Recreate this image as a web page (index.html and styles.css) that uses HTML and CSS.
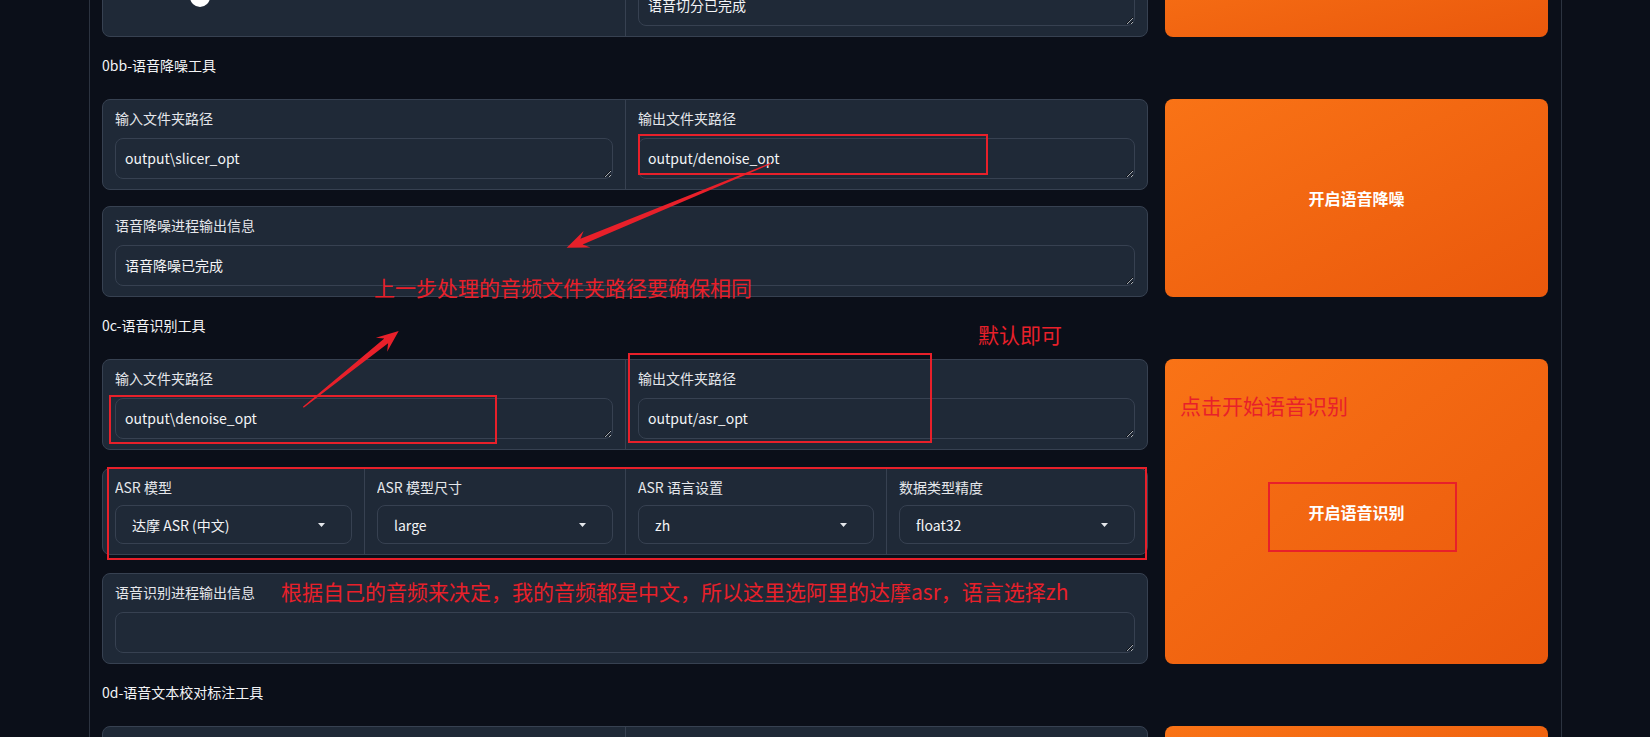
FILE: index.html
```html
<!DOCTYPE html>
<html lang="zh-CN">
<head>
<meta charset="utf-8">
<title>GPT-SoVITS WebUI</title>
<link rel="stylesheet" href="styles.css">
</head>
<body>
<div class="page">
  <div class="container">

    <div class="row">
      <div class="col-main gap-17">
        <div class="block">
          <div class="cell">
            <div class="label-space"></div>
            <div class="slider">
              <div class="track"><div class="fill" style="width:17.1%"><span class="thumb"></span></div></div>
            </div>
          </div>
          <div class="cell">
            <div class="label-space"></div>
            <textarea class="textarea" readonly>语音切分已完成</textarea>
          </div>
        </div>
      </div>
      <div class="col-side"><button class="btn" aria-label="开启语音切割"></button></div>
    </div>

    <div class="section-label">0bb-语音降噪工具</div>

    <div class="row">
      <div class="col-main gap-16">
        <div class="block">
          <div class="cell">
            <div class="label">输入文件夹路径</div>
            <textarea class="textarea" readonly>output\slicer_opt</textarea>
          </div>
          <div class="cell">
            <div class="label">输出文件夹路径</div>
            <textarea class="textarea" readonly>output/denoise_opt</textarea>
          </div>
        </div>
        <div class="block">
          <div class="cell">
            <div class="label">语音降噪进程输出信息</div>
            <textarea class="textarea" readonly>语音降噪已完成</textarea>
          </div>
        </div>
      </div>
      <div class="col-side"><button class="btn">开启语音降噪</button></div>
    </div>

    <div class="section-label">0c-语音识别工具</div>

    <div class="row">
      <div class="col-main gap-18">
        <div class="block">
          <div class="cell">
            <div class="label">输入文件夹路径</div>
            <textarea class="textarea" readonly>output\denoise_opt</textarea>
          </div>
          <div class="cell">
            <div class="label">输出文件夹路径</div>
            <textarea class="textarea" readonly>output/asr_opt</textarea>
          </div>
        </div>
        <div class="block dd-block">
          <div class="cell">
            <div class="label">ASR 模型</div>
            <div class="dropdown"><span class="val">达摩 ASR (中文)</span><svg viewBox="0 0 7 4"><path d="M0 0H7L3.5 4Z" fill="#e5e7eb"/></svg></div>
          </div>
          <div class="cell">
            <div class="label">ASR 模型尺寸</div>
            <div class="dropdown"><span class="val">large</span><svg viewBox="0 0 7 4"><path d="M0 0H7L3.5 4Z" fill="#e5e7eb"/></svg></div>
          </div>
          <div class="cell">
            <div class="label">ASR 语言设置</div>
            <div class="dropdown"><span class="val">zh</span><svg viewBox="0 0 7 4"><path d="M0 0H7L3.5 4Z" fill="#e5e7eb"/></svg></div>
          </div>
          <div class="cell">
            <div class="label">数据类型精度</div>
            <div class="dropdown"><span class="val">float32</span><svg viewBox="0 0 7 4"><path d="M0 0H7L3.5 4Z" fill="#e5e7eb"/></svg></div>
          </div>
        </div>
        <div class="block">
          <div class="cell">
            <div class="label">语音识别进程输出信息</div>
            <textarea class="textarea" readonly></textarea>
          </div>
        </div>
      </div>
      <div class="col-side"><button class="btn">开启语音识别</button></div>
    </div>

    <div class="section-label">0d-语音文本校对标注工具</div>

    <div class="row">
      <div class="col-main gap-16">
        <div class="block">
          <div class="cell">
            <div class="label-space"></div>
            <textarea class="textarea" readonly></textarea>
          </div>
          <div class="cell">
            <div class="label-space"></div>
            <textarea class="textarea" readonly></textarea>
          </div>
        </div>
      </div>
      <div class="col-side"><button class="btn" aria-label="开启打标WebUI"></button></div>
    </div>

  </div>

  <div class="annot">
    <svg class="arrows" viewBox="0 0 1650 737" width="1650" height="737">
      <polygon points="771.2,163.9 582.6,244.4 590.4,247.6 566.7,247.7 583.6,231.0 580.4,238.8 770.8,162.7" fill="#e8202a"/>
      <polygon points="303.7,407.8 388.1,343.3 387.1,351.7 398.7,331 375.9,337.7 384.3,338.6 302.9,406.8" fill="#e8202a"/>
    </svg>
    <div class="rect rect-a"></div>
    <div class="rect rect-b"></div>
    <div class="rect rect-c"></div>
    <div class="rect rect-d"></div>
    <div class="rect rect-e"></div>
    <div class="note note-1">上一步处理的音频文件夹路径要确保相同</div>
    <div class="note note-2">默认即可</div>
    <div class="note note-3">点击开始语音识别</div>
    <div class="note note-4">根据自己的音频来决定，我的音频都是中文，所以这里选阿里的达摩asr，语言选择zh</div>
  </div>
</div>
</body>
</html>
```

FILE: styles.css
```css
* { box-sizing: border-box; }

html, body {
  margin: 0;
  padding: 0;
  background: #0b0f19;
  color-scheme: dark;
}

body {
  font-family: "Noto Sans CJK SC", "Liberation Sans", sans-serif;
  color: #e5e7eb;
}

.page {
  position: relative;
  width: 1650px;
  height: 737px;
  overflow: hidden;
}

.container {
  margin: -54px 0 0 89px;
  width: 1473px;
  min-height: 900px;
  border-left: 1px solid #2c3340;
  border-right: 1px solid #2c3340;
  padding: 0 13px 0 12px;
  display: flex;
  flex-direction: column;
  gap: 16px;
}

.row {
  display: flex;
  gap: 17px;
  align-items: stretch;
}

.col-main {
  flex: 0 0 1046px;
  display: flex;
  flex-direction: column;
}
.gap-16 { gap: 16px; }
.gap-17 { gap: 17px; }
.gap-18 { gap: 18px; }

.col-side {
  flex: 1;
  display: flex;
}

.btn {
  flex: 1;
  border: none;
  border-radius: 8px;
  background: linear-gradient(to bottom right, #f97316, #ea580c);
  color: #ffffff;
  font-family: "Noto Sans CJK SC", sans-serif;
  font-size: 16px;
  font-weight: 600;
  cursor: pointer;
}

.section-label {
  font-size: 14px;
  line-height: 20px;
  padding: 2px 0 8px;
  color: #f3f4f6;
}

.block {
  background: #1f2937;
  border: 1px solid #374151;
  border-radius: 8px;
  display: grid;
  grid-auto-flow: column;
  grid-auto-columns: 1fr;
  overflow: hidden;
}

.cell {
  padding: 8px 12px 10px;
  min-width: 0;
}
.cell + .cell { border-left: 1px solid #374151; }

.label {
  font-size: 14px;
  line-height: 20px;
  color: #e5e7eb;
  margin-bottom: 10px;
  white-space: nowrap;
  overflow: hidden;
}
.label-space {
  height: 20px;
  margin-bottom: 10px;
}
.dd-block .label { margin-bottom: 8px; }

.textarea {
  display: block;
  width: 100%;
  height: 41px;
  margin: 0;
  background: #1f2937;
  border: 1px solid #374151;
  border-radius: 8px;
  padding: 9px 9px;
  font-family: "Noto Sans CJK SC", "Liberation Sans", sans-serif;
  font-size: 14px;
  line-height: 20px;
  color: #f3f4f6;
  resize: vertical;
  overflow: hidden;
  outline: none;
}

.dropdown {
  height: 39px;
  border: 1px solid #374151;
  border-radius: 8px;
  display: flex;
  align-items: center;
  padding: 0 26px 0 16px;
  font-size: 14px;
  color: #f3f4f6;
}
.dropdown .val { flex: 1; white-space: nowrap; }
.dropdown svg { width: 7px; height: 4px; display: block; }

.slider {
  position: relative;
  height: 41px;
}
.track {
  position: absolute;
  left: 0;
  right: 0;
  top: 10px;
  height: 4px;
  border-radius: 2px;
  background: #374151;
}
.fill {
  position: relative;
  height: 100%;
  border-radius: 2px;
  background: #f97316;
}
.thumb {
  position: absolute;
  right: -10px;
  top: -8px;
  width: 20px;
  height: 20px;
  border-radius: 50%;
  background: #ffffff;
}

/* annotation overlay */
.annot {
  position: absolute;
  left: 0;
  top: 0;
  width: 1650px;
  height: 737px;
  pointer-events: none;
}
.arrows {
  position: absolute;
  left: 0;
  top: 0;
}
.rect {
  position: absolute;
  border: 2px solid #e8202a;
}
.rect-a { left: 638px; top: 134px; width: 350px; height: 41px; }
.rect-b { left: 109px; top: 395px; width: 388px; height: 49px; }
.rect-c { left: 628px; top: 353px; width: 304px; height: 90px; }
.rect-d { left: 107px; top: 467px; width: 1040px; height: 93px; }
.rect-e { left: 1268px; top: 482px; width: 189px; height: 70px; }

.note {
  position: absolute;
  font-family: "Noto Sans CJK SC", sans-serif;
  font-size: 21px;
  line-height: 21px;
  color: #e8202a;
  white-space: nowrap;
}
.note-1 { left: 374px; top: 277px; }
.note-2 { left: 978px; top: 324px; }
.note-3 { left: 1180px; top: 395px; }
.note-4 { left: 281px; top: 581px; }
```
